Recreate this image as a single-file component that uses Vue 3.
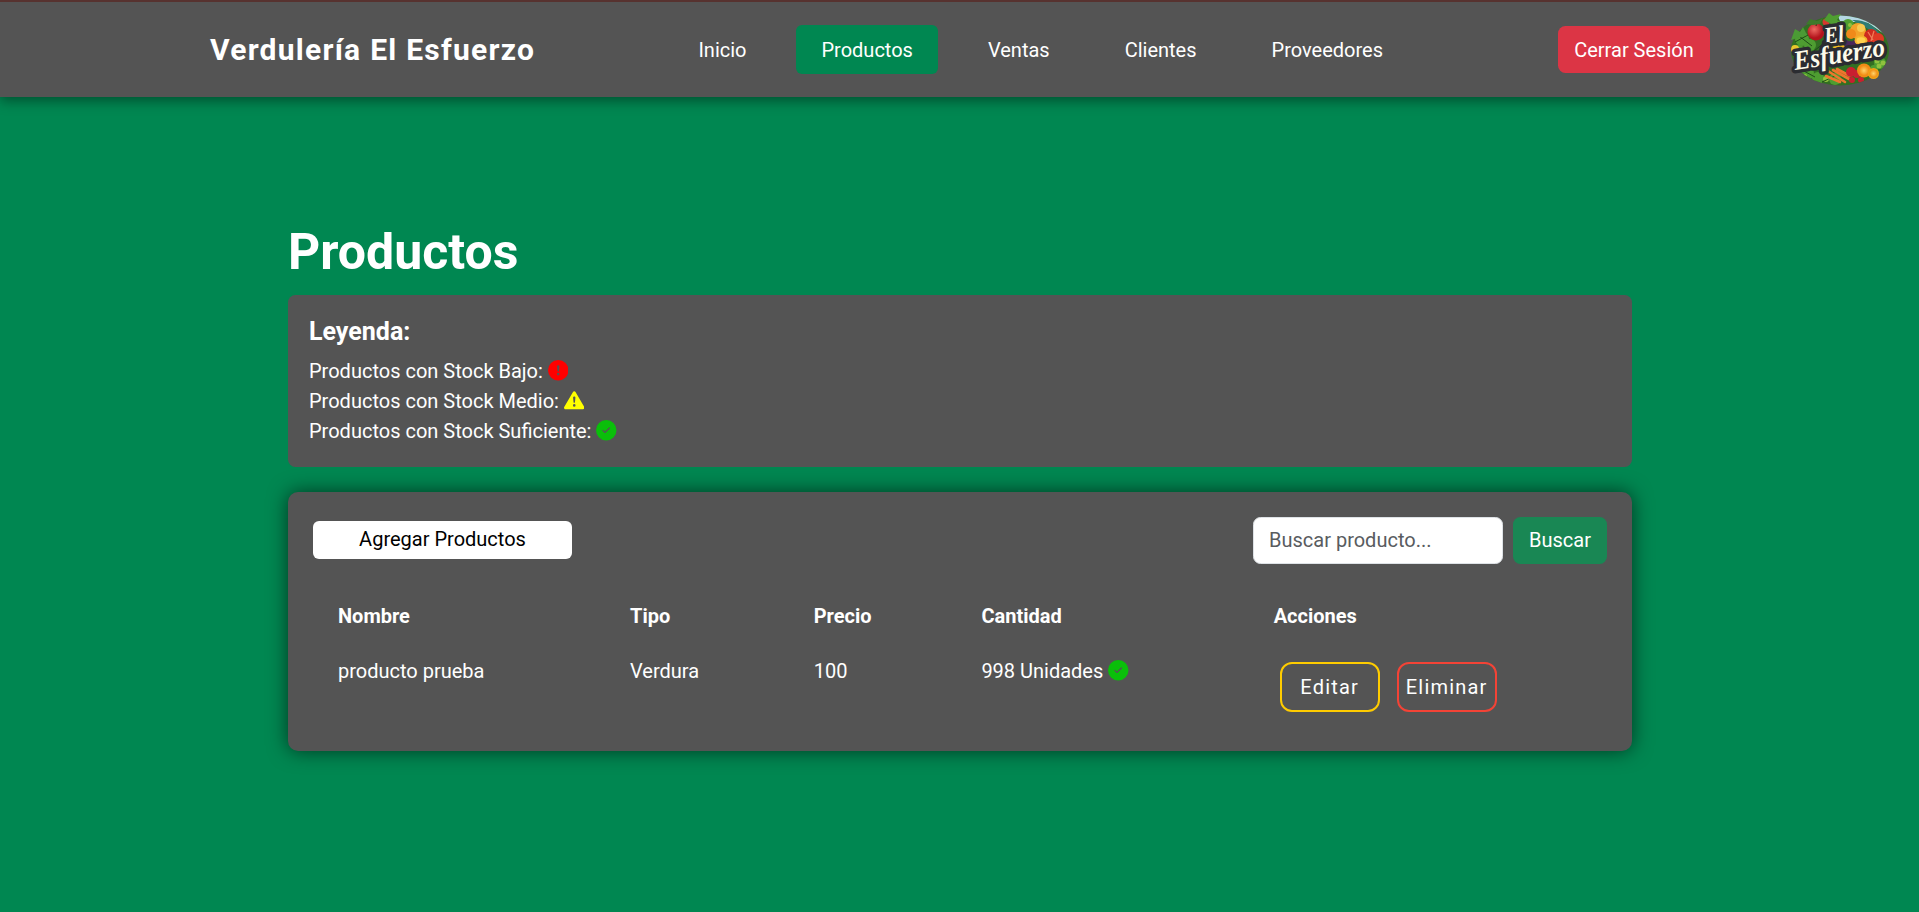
<script setup>
import { ref } from 'vue'

const links = [
  { label: 'Inicio', active: false },
  { label: 'Productos', active: true },
  { label: 'Ventas', active: false },
  { label: 'Clientes', active: false },
  { label: 'Proveedores', active: false },
]
const columns = ['Nombre', 'Tipo', 'Precio', 'Cantidad', 'Acciones']
const products = ref([
  { name: 'producto prueba', type: 'Verdura', price: 100, stock: '998 Unidades' },
])
const search = ref('')
</script>

<template>
  <div class="page">
    <header class="navbar">
      <div class="brand">Verdulería El Esfuerzo</div>
      <nav class="links">
        <a v-for="l in links" :key="l.label" class="link" :class="{ active: l.active }">{{ l.label }}</a>
      </nav>
      <button class="logout">Cerrar Sesión</button>
      <svg class="logo" viewBox="0 0 100 76">
        <defs>
          <clipPath id="oval"><ellipse cx="50" cy="38.5" rx="49" ry="35" /></clipPath>
          <radialGradient id="apple" cx=".4" cy=".35"><stop offset="0" stop-color="#ee6a62" /><stop offset="1" stop-color="#b3141c" /></radialGradient>
          <radialGradient id="orange"><stop offset="0" stop-color="#ffd36a" /><stop offset="1" stop-color="#f28c12" /></radialGradient>
        </defs>
        <g clip-path="url(#oval)">
          <rect width="100" height="76" fill="#326f22" />
          <path d="M46 0H100V26L78 11L50 9Z" fill="#b5d7e4" />
          <path d="M62 8Q80 7 92 24L80 18Z" fill="#2e7c74" />
          <g fill="#4e9d31">
            <circle cx="12" cy="27" r="7" /><circle cx="20" cy="33" r="6" /><circle cx="9" cy="38" r="5" />
            <circle cx="17" cy="61" r="7" /><circle cx="28" cy="66" r="6" /><circle cx="90" cy="51" r="6" />
            <circle cx="84" cy="57" r="4" /><circle cx="45" cy="67" r="6" /><circle cx="58" cy="13" r="6" />
          </g>
          <g fill="#8fc23e">
            <circle cx="87" cy="49" r="2.5" /><circle cx="93" cy="51" r="2.5" /><circle cx="89" cy="54" r="2.5" />
            <circle cx="36" cy="67" r="3" /><circle cx="15" cy="64" r="2" /><circle cx="60" cy="13" r="2" />
          </g>
          <g stroke="#1d4c18" stroke-width="1" fill="none">
            <path d="M5 30L18 23M9 24L22 34M12 58L25 65M24 39L34 31M32 70L45 64" />
          </g>
          <circle cx="5" cy="37" r="4" fill="#e8c72d" />
          <circle cx="49" cy="36" r="6" fill="#f3bd23" />
          <circle cx="68" cy="19" r="8" fill="#f2a32a" />
          <circle cx="71" cy="16" r="4" fill="#f8ca50" />
          <circle cx="61" cy="22" r="5" fill="#f08a1a" />
          <circle cx="81" cy="24" r="7" fill="#cf2b1f" />
          <circle cx="88" cy="27" r="6" fill="#df3a25" />
          <path d="M78 20L83 28M84 19L81 29" stroke="#ef7b55" stroke-width="1.3" />
          <g fill="#4a285a">
            <circle cx="56" cy="31" r="3" /><circle cx="60" cy="32" r="3" /><circle cx="65" cy="31" r="3" />
            <circle cx="58" cy="35" r="3" /><circle cx="63" cy="35" r="3" />
          </g>
          <ellipse cx="71" cy="28.5" rx="6.5" ry="5" fill="#f4b42c" />
          <ellipse cx="71" cy="28.5" rx="4.5" ry="3.3" fill="#ffd24e" />
          <g stroke="#ee762d" stroke-width="2.6" stroke-linecap="round">
            <path d="M38 59L55 70M43 58L59 67M47 57L60 64M36 64L50 70" />
          </g>
          <g fill="#c91f30">
            <circle cx="61" cy="60" r="5" /><circle cx="67" cy="62" r="4" /><circle cx="62" cy="68" r="3" /><circle cx="71" cy="68" r="3" />
          </g>
        </g>
        <circle cx="26" cy="20" r="8.5" fill="url(#apple)" />
        <path d="M26 14Q27 9 31 8" stroke="#49301b" stroke-width="1.2" fill="none" />
        <circle cx="36" cy="10" r="3.5" fill="#d6392e" />
        <path d="M34 8L39 1L43 4L51 2L47 8L53 11L43 13Z" fill="#4f9d31" />
        <path d="M16 12L20 7L27 9L33 6L30 12L23 13Z" fill="#3d7a2b" />
        <path d="M1 28L5 17L10 20L13 15L17 23Z" fill="#4b9a35" />
        <g class="script">
          <text x="35" y="32" textLength="20" lengthAdjust="spacingAndGlyphs" font-size="24" transform="rotate(-7 35 32)">El</text>
          <text x="5" y="58" textLength="92" lengthAdjust="spacingAndGlyphs" font-size="27" transform="rotate(-9 5 58)">Esfuerzo</text>
        </g>
        <circle cx="74" cy="58.5" r="7" fill="#f18b16" />
        <circle cx="74" cy="58.5" r="5" fill="url(#orange)" />
        <circle cx="83.5" cy="61.5" r="5.5" fill="#f1a316" />
        <circle cx="83.5" cy="61.5" r="4" fill="url(#orange)" />
      </svg>
    </header>

    <main class="content">
      <h1>Productos</h1>
      <section class="legend">
        <h2>Leyenda:</h2>
        <p>Productos con Stock Bajo:
          <svg class="icon red" viewBox="0 0 16 16"><path d="M16 8A8 8 0 1 1 0 8a8 8 0 0 1 16 0M8 4a.905.905 0 0 0-.9.995l.35 3.507a.552.552 0 0 0 1.1 0l.35-3.507A.905.905 0 0 0 8 4m.002 6a1 1 0 1 0 0 2 1 1 0 0 0 0-2" /></svg>
        </p>
        <p>Productos con Stock Medio:
          <svg class="icon yellow" viewBox="0 0 16 16"><path d="M8.982 1.566a1.13 1.13 0 0 0-1.96 0L.165 13.233c-.457.778.091 1.767.98 1.767h13.713c.889 0 1.438-.99.98-1.767zM8 5c.535 0 .954.462.9.995l-.35 3.507a.552.552 0 0 1-1.1 0L7.1 5.995A.905.905 0 0 1 8 5m.002 6a1 1 0 1 1 0 2 1 1 0 0 1 0-2" /></svg>
        </p>
        <p>Productos con Stock Suficiente:
          <svg class="icon green" viewBox="0 0 16 16"><path d="M16 8A8 8 0 1 1 0 8a8 8 0 0 1 16 0m-5.146-2.146a.5.5 0 0 0-.708 0L7 9 5.854 7.854a.5.5 0 1 0-.708.708l1.5 1.5a.5.5 0 0 0 .708 0l3.5-3.5a.5.5 0 0 0 0-.708" /></svg>
        </p>
      </section>

      <section class="panel">
        <div class="toolbar">
          <button class="add">Agregar Productos</button>
          <form class="search" @submit.prevent>
            <input v-model="search" type="text" placeholder="Buscar producto..." />
            <button class="find">Buscar</button>
          </form>
        </div>
        <div class="row head">
          <div v-for="c in columns" :key="c">{{ c }}</div>
        </div>
        <div v-for="p in products" :key="p.name" class="row">
          <div>{{ p.name }}</div>
          <div>{{ p.type }}</div>
          <div>{{ p.price }}</div>
          <div>{{ p.stock }}
            <svg class="icon green" viewBox="0 0 16 16"><path d="M16 8A8 8 0 1 1 0 8a8 8 0 0 1 16 0m-5.146-2.146a.5.5 0 0 0-.708 0L7 9 5.854 7.854a.5.5 0 1 0-.708.708l1.5 1.5a.5.5 0 0 0 .708 0l3.5-3.5a.5.5 0 0 0 0-.708" /></svg>
          </div>
          <div class="actions">
            <button class="edit">Editar</button>
            <button class="delete">Eliminar</button>
          </div>
        </div>
      </section>
    </main>
  </div>
</template>

<style>
body {
  margin: 0;
  background: #008751;
}
</style>

<style scoped>
.page {
  min-height: 912px;
  background: #008751;
  color: #fff;
  font: 400 20px/30px Roboto, sans-serif;
}
.page *,
.page {
  box-sizing: border-box;
}
button,
input {
  font: inherit;
  border: 0;
  margin: 0;
}
.navbar {
  display: flex;
  align-items: center;
  height: 97px;
  padding: 0 29px 0 210px;
  background: #545454;
  border-top: 2px solid #57322f;
  box-shadow: 0 4px 12px rgba(0, 0, 0, 0.4);
}
.brand {
  width: 463.4px;
  font-size: 30px;
  font-weight: 700;
  letter-spacing: 1.25px;
  white-space: nowrap;
}
.links {
  display: flex;
  gap: 25px;
  width: 884.6px;
}
.link {
  height: 49px;
  padding: 10px 25px 9px;
  border-radius: 6px;
}
.link.active {
  background: #008751;
}
.logout {
  width: 152px;
  height: 47px;
  padding: 1px 0 0;
  color: #fff;
  background: #dc3545;
  border-radius: 7.5px;
}
.logo {
  width: 100px;
  height: 76px;
  margin-left: auto;
  overflow: visible;
}
.script {
  font-family: "Liberation Serif", serif;
  font-style: italic;
  font-weight: 700;
  fill: #fdfbea;
  stroke: #2b2c31;
  stroke-width: 7px;
  stroke-linejoin: round;
  paint-order: stroke;
}
.content {
  width: 1344px;
  margin-left: 288px;
  padding-top: 125px;
}
h1 {
  margin: 0 0 13px;
  font-size: 50px;
  line-height: 60px;
  font-weight: 700;
}
.legend {
  height: 172px;
  padding: 22px 21px 21px;
  background: #545454;
  border-radius: 7.5px;
}
h2 {
  margin: 0 0 9px;
  font-size: 25px;
  line-height: 30px;
  font-weight: 700;
}
p {
  margin: 0;
}
.icon {
  width: 20.5px;
  height: 20.5px;
  vertical-align: -2.5px;
  fill: currentColor;
}
.red {
  color: #f00;
}
.yellow {
  color: #ff0;
}
.green {
  color: #0abf0a;
}
.panel {
  height: 259px;
  margin-top: 25px;
  padding: 25px;
  background: #545454;
  border-radius: 10px;
  box-shadow: 0 0 20px rgba(0, 0, 0, 0.6);
}
.toolbar {
  display: flex;
  justify-content: space-between;
  align-items: flex-start;
  height: 47px;
  margin-bottom: 25px;
}
.add {
  width: 259px;
  height: 38px;
  margin-top: 4px;
  padding: 0 0 2px;
  background: #fff;
  color: #000;
  border-radius: 6px;
}
.search {
  display: flex;
  gap: 10px;
}
.search input {
  width: 250px;
  height: 47px;
  padding: 0 15px 1px;
  border: 1px solid #dee2e6;
  border-radius: 7.5px;
  background: #fff;
}
.search input::placeholder {
  color: #595c5f;
  opacity: 1;
}
.find {
  width: 94px;
  height: 47px;
  padding: 0 0 1px;
  color: #fff;
  background: #198754;
  border-radius: 7.5px;
}
.row {
  display: grid;
  grid-template-columns: 292px 183.7px 167.7px 292.3px 1fr;
  padding: 12px 25px;
}
.head {
  font-weight: 700;
  height: 55px;
}
.actions {
  display: flex;
  gap: 17px;
  padding: 6px;
}
.actions button {
  width: 100px;
  height: 50px;
  padding: 0;
  color: #fff;
  background: transparent;
  letter-spacing: 1.2px;
  border-radius: 12px;
}
.actions .edit {
  border: 2px solid #ffcc00;
}
.actions .delete {
  border: 2px solid #f44336;
}
</style>
